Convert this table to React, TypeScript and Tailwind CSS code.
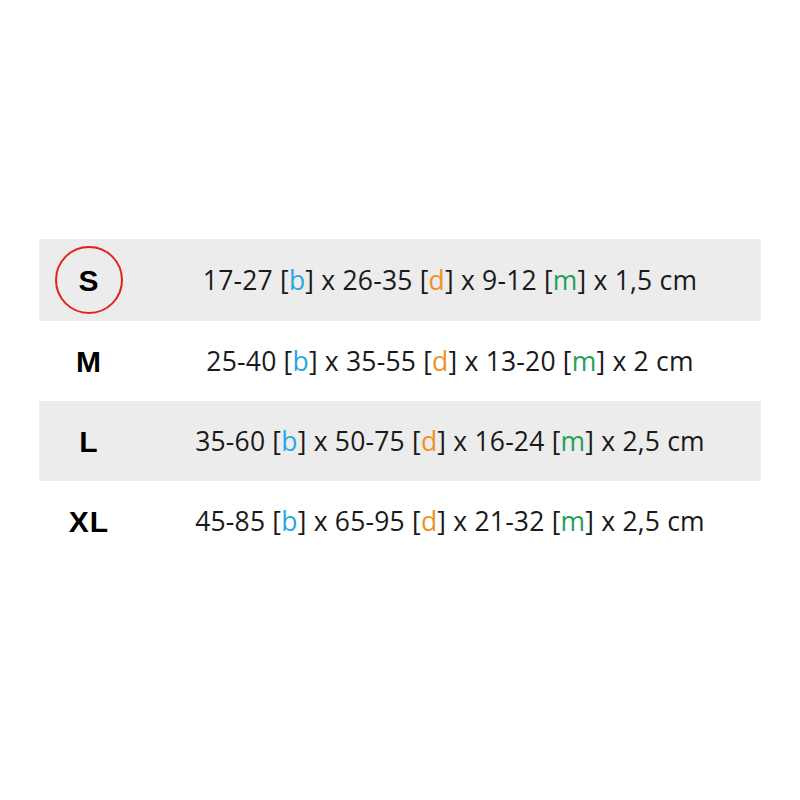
const rows = [
  { size: "S", a: "17-27", b: "26-35", c: "9-12", d: "1,5", active: true },
  { size: "M", a: "25-40", b: "35-55", c: "13-20", d: "2" },
  { size: "L", a: "35-60", b: "50-75", c: "16-24", d: "2,5" },
  { size: "XL", a: "45-85", b: "65-95", c: "21-32", d: "2,5" },
];

export default function App() {
  return (
    <div
      className="h-[800px] w-[800px] bg-white pt-[239px]"
      style={{ fontFamily: '"Open Sans", "Liberation Sans", sans-serif' }}
    >
      <div className="mx-[39px] flex flex-col">
        {rows.map((r, i) => (
          <div
            key={r.size}
            className={`flex items-center ${i === 0 ? "h-[82px]" : "h-[80px]"} ${
              i % 2 === 0 ? "bg-[#ececec]" : "bg-white"
            }`}
          >
            <div className="flex w-[100px] justify-center">
              <span
                className={`flex h-[68px] w-[68px] items-center justify-center rounded-full text-[30px] font-bold tracking-[1px] text-black ${
                  r.active ? "border-[2.5px] border-[#e2231a]" : ""
                }`}
                style={{ fontFamily: '"Liberation Sans", sans-serif' }}
              >
                {r.size}
              </span>
            </div>
            <div className="flex-1 pt-[2px] text-center text-[26.5px] tracking-[0.2px] text-[#1a1a1a]">
              {r.a} [<span className="text-[#2aa6e0]">b</span>] x {r.b} [
              <span className="text-[#ee9128]">d</span>] x {r.c} [
              <span className="text-[#26a05a]">m</span>] x {r.d} cm
            </div>
          </div>
        ))}
      </div>
    </div>
  );
}
